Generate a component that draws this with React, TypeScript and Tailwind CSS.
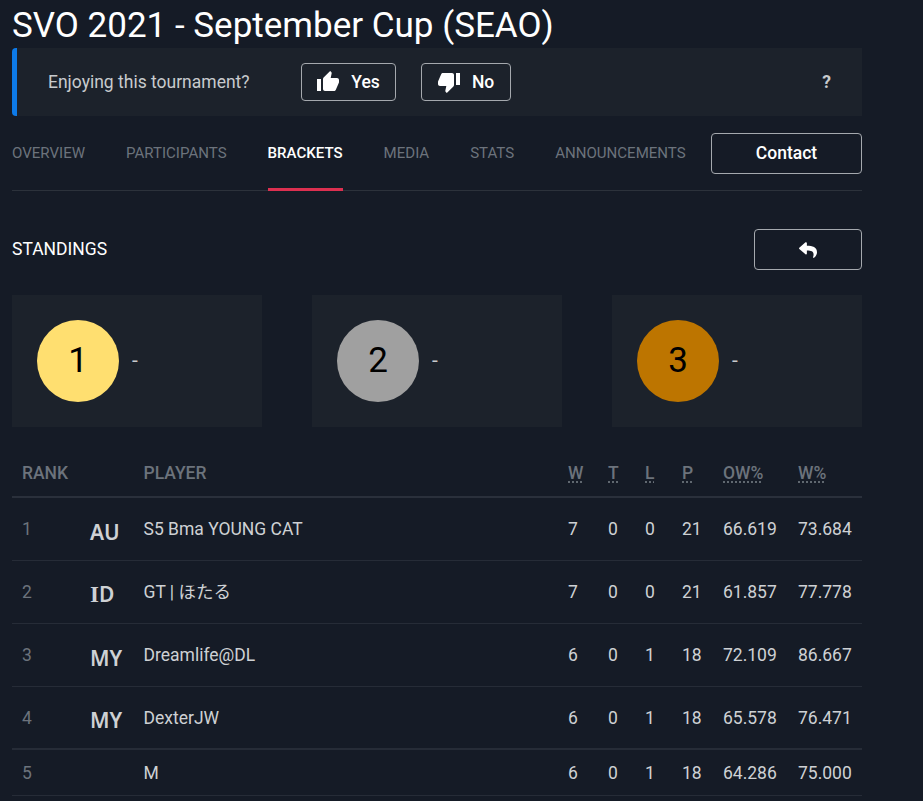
import React from "react";
import { FaReply } from "react-icons/fa";
import { MdThumbUp, MdThumbDown } from "react-icons/md";

const tabs = ["OVERVIEW", "PARTICIPANTS", "BRACKETS", "MEDIA", "STATS", "ANNOUNCEMENTS"];

const podium = [
  { place: 1, color: "bg-[#ffdf70]" },
  { place: 2, color: "bg-[#a0a0a0]" },
  { place: 3, color: "bg-[#bd7500]" },
];

const stats = [
  { label: "W", cell: "w-[40px]" },
  { label: "T", cell: "w-[37px]" },
  { label: "L", cell: "w-[37px]" },
  { label: "P", cell: "w-[41px]" },
  { label: "OW%", cell: "w-[75px]" },
  { label: "W%", cell: "w-[64px]" },
];

const rows = [
  { rank: 1, flag: "AU", name: "S5 Bma YOUNG CAT", values: ["7", "0", "0", "21", "66.619", "73.684"] },
  { rank: 2, flag: "ID", name: "GT | ほたる", values: ["7", "0", "0", "21", "61.857", "77.778"] },
  { rank: 3, flag: "MY", name: "Dreamlife@DL", values: ["6", "0", "1", "18", "72.109", "86.667"] },
  { rank: 4, flag: "MY", name: "DexterJW", values: ["6", "0", "1", "18", "65.578", "76.471"] },
  { rank: 5, flag: "", name: "M", values: ["6", "0", "1", "18", "64.286", "75.000"] },
];

function Flag({ code }: { code: string }) {
  // the I of this flag font has serifs
  if (code === "ID") {
    return (
      <>
        <span className="font-['Liberation_Serif',serif] text-[23px] font-bold">I</span>D
      </>
    );
  }
  return <>{code}</>;
}

export default function App() {
  const outlineBtn = "flex items-center justify-center rounded border border-[#a5a9ae] text-white";

  return (
    <div className="h-[801px] overflow-hidden bg-[#151b26] pl-3 font-['Roboto','Noto_Sans_CJK_JP',sans-serif] text-[#ced1d4]">
      <div className="w-[850px]">
        <h1 className="h-12 pt-[3px] text-[35px] leading-[46px] text-white">SVO 2021 - September Cup (SEAO)</h1>

        <div className="flex h-[68px] items-center rounded-l border-l-[5px] border-[#0d7ae8] bg-[#1c222b] pr-[31px] pl-[31px]">
          <span className="text-[17.5px] text-[#c8cbce]">Enjoying this tournament?</span>
          <button className={`${outlineBtn} ml-[51px] h-[38px] w-[95px] gap-[11px]`}>
            <MdThumbUp className="text-[24px]" />
            <span className="text-[17.5px] font-medium">Yes</span>
          </button>
          <button className={`${outlineBtn} ml-[25px] h-[38px] w-[90px] gap-[11px]`}>
            <MdThumbDown className="text-[24px]" />
            <span className="text-[17.5px] font-medium">No</span>
          </button>
          <span className="ml-auto text-[17.5px] font-bold text-[#c8cbce]">?</span>
        </div>

        <div className="flex h-[75px] items-start border-b border-[#2c323b]">
          <nav className="flex gap-[41px] pt-[17px]">
            {tabs.map((tab) => (
              <a
                key={tab}
                className={
                  tab === "BRACKETS"
                    ? "h-[58px] border-b-[3px] border-[#dc3050] pt-[10px] text-[15.05px] leading-[20px] font-medium text-white"
                    : "h-[58px] pt-[10px] text-[15.05px] leading-[20px] text-[#6c737c]"
                }
              >
                {tab}
              </a>
            ))}
          </nav>
          <button className={`${outlineBtn} mt-[17px] ml-auto h-[41px] w-[151px] text-[17.5px] font-medium`}>Contact</button>
        </div>

        <div className="mt-[38px] flex h-[41px] items-center justify-between">
          <h2 className="-mt-px text-[17.5px] leading-5 text-white">STANDINGS</h2>
          <button className={`${outlineBtn} h-[41px] w-[108px]`}>
            <FaReply className="text-[18px]" />
          </button>
        </div>

        <div className="mt-[25px] flex justify-between">
          {podium.map((p) => (
            <div key={p.place} className="flex h-[132px] w-[250px] items-center gap-[13px] bg-[#1c222b] pl-[25px]">
              <div className={`flex size-[82px] items-center justify-center rounded-full text-[35px] text-black ${p.color}`}>
                {p.place}
              </div>
              <span className="text-[21px] text-[#c8cbce]">-</span>
            </div>
          ))}
        </div>

        <table className="mt-[23px] w-full table-fixed border-collapse text-[17.5px]">
          <thead>
            <tr className="h-[47px] border-b-2 border-[#2a303b] text-left text-[#6c737c]">
              <th className="w-[78px] pt-px pl-[10px] font-medium">RANK</th>
              <th className="w-[53.5px]" />
              <th className="pt-px font-medium">PLAYER</th>
              {stats.map((s) => (
                <th key={s.label} className={`${s.cell} pt-px font-medium`}>
                  <span className="underline decoration-dotted underline-offset-2">{s.label}</span>
                </th>
              ))}
            </tr>
          </thead>
          <tbody>
            {rows.map((row) => (
              <tr
                key={row.rank}
                className={`${row.rank === 5 ? "h-[46px]" : "h-[63px]"} border-b border-[#262c37] ${row.rank === 4 ? "border-b-2 border-[#2a303b]" : ""}`}
              >
                <td className="pt-px pl-[10px] text-[#6c737c]">{row.rank}</td>
                <td className="pt-[6px] font-['Noto_Sans',sans-serif] text-[21px] leading-5 font-semibold">
                  <Flag code={row.flag} />
                </td>
                <td className="pt-px">{row.name}</td>
                {row.values.map((value, i) => (
                  <td key={i} className="pt-px">
                    {value}
                  </td>
                ))}
              </tr>
            ))}
          </tbody>
        </table>
      </div>
    </div>
  );
}
